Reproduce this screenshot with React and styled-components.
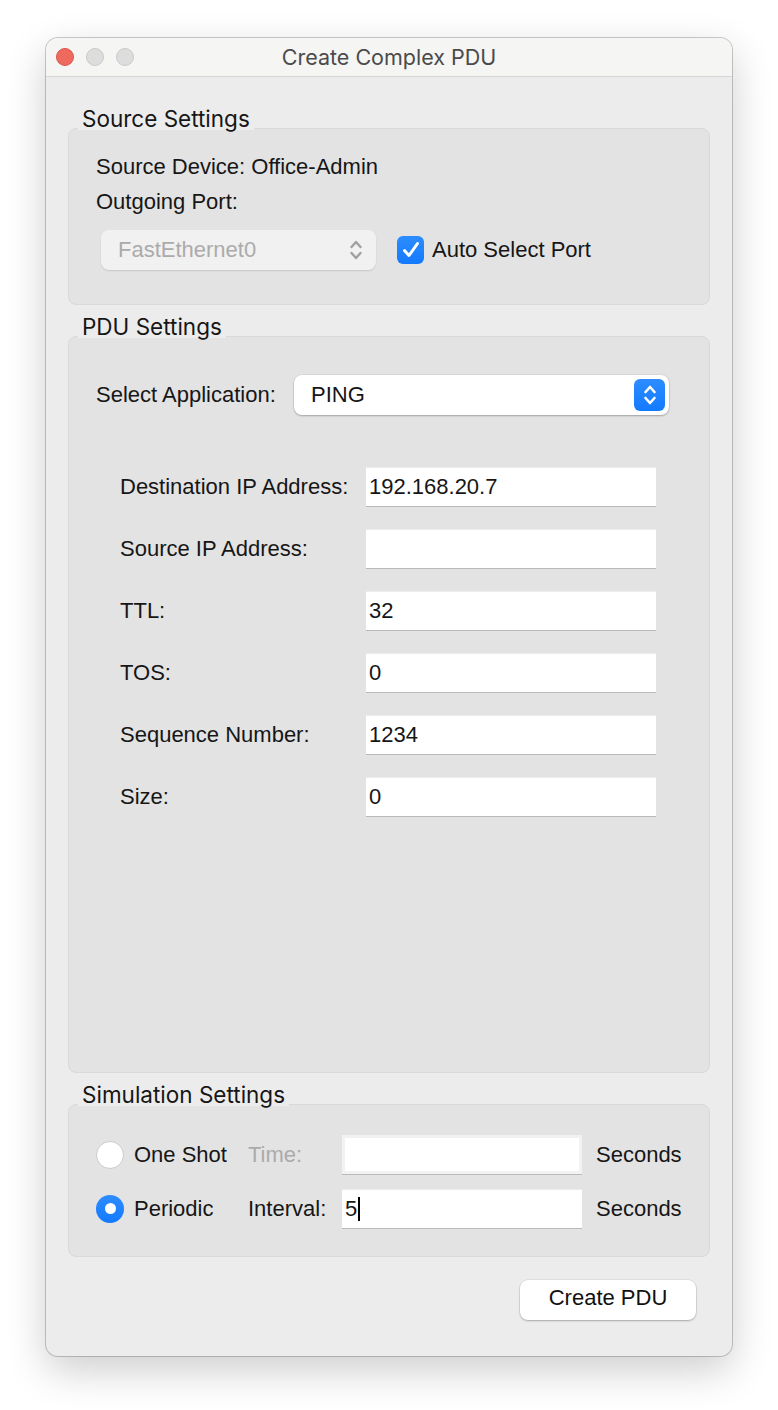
import React from "react";
import styled, { createGlobalStyle } from "styled-components";

const Global = createGlobalStyle`
  html, body { margin: 0; padding: 0; background: #ffffff; }
  body { font-family: "Liberation Sans", Arial, sans-serif; }
  * { box-sizing: border-box; }
`;

const Page = styled.div`
  padding: 38px 0 0 46px;
  width: 778px;
  height: 1410px;
`;

const Window = styled.div`
  width: 686px;
  height: 1318px;
  background: #ececec;
  border-radius: 12px;
  box-shadow: 0 0 0 1px rgba(0, 0, 0, 0.2), 0 14px 40px rgba(0, 0, 0, 0.2);
  display: flex;
  flex-direction: column;
  overflow: hidden;
`;

const TitleBar = styled.div`
  height: 39px;
  flex: none;
  background: #f5f5f4;
  border-bottom: 1px solid #d6d6d6;
  position: relative;
  display: flex;
  align-items: center;
  justify-content: center;
`;

const Lights = styled.div`
  position: absolute;
  left: 10px;
  top: 10px;
  display: flex;
  gap: 12px;
`;

const Light = styled.span`
  width: 18px;
  height: 18px;
  border-radius: 50%;
  background: ${(p) => (p.$red ? "#ee6a5f" : "#dddddd")};
  border: 1px solid ${(p) => (p.$red ? "#d9564b" : "#c9c9c9")};
`;

const Title = styled.div`
  font-family: Inter, "Open Sans", sans-serif;
  font-size: 21.5px;
  color: #4b4b4b;
  margin-top: -1px;
`;

const Content = styled.div`
  flex: 1;
  display: flex;
  flex-direction: column;
  padding: 31px 22px 36px 22px;
`;

const Group = styled.div`
  display: flex;
  flex-direction: column;
  flex: ${(p) => (p.$grow ? 1 : "none")};
  margin-top: ${(p) => p.$mt || 0}px;
`;

const Legend = styled.div`
  align-self: flex-start;
  margin-left: 10px;
  padding: 0 4px;
  height: 22px;
  line-height: 22px;
  margin-bottom: -2px;
  position: relative;
  z-index: 1;
  background: #ececec;
  font-family: Inter, "Open Sans", sans-serif;
  font-size: 22.5px;
  color: #161616;
`;

const Box = styled.div`
  background: #e3e3e3;
  border: 1px solid #d9d9d9;
  border-radius: 8px;
  flex: ${(p) => (p.$grow ? 1 : "none")};
  height: ${(p) => (p.$h ? `${p.$h}px` : "auto")};
  padding: ${(p) => p.$pad};
  display: flex;
  flex-direction: column;
`;

const Text = styled.div`
  font-size: 22px;
  line-height: 24px;
  color: ${(p) => (p.$muted ? "#ababab" : "#161616")};
  white-space: nowrap;
`;

const Row = styled.div`
  display: flex;
  align-items: center;
  margin-top: ${(p) => p.$mt || 0}px;
  margin-left: ${(p) => p.$ml || 0}px;
`;

const PortSelect = styled.div`
  width: 275px;
  height: 40px;
  border-radius: 8px;
  background: #f1f1f1;
  box-shadow: 0 1px 1.5px rgba(0, 0, 0, 0.12);
  display: flex;
  align-items: center;
  justify-content: space-between;
  padding: 0 13px 0 17px;
`;

const Checkbox = styled.span`
  width: 27px;
  height: 28px;
  border-radius: 6px;
  background: linear-gradient(#2d8cff, #137aff);
  display: flex;
  align-items: center;
  justify-content: center;
  margin-left: 21px;
  margin-right: 8px;
`;

const AppSelect = styled.div`
  width: 375px;
  height: 40px;
  border-radius: 8px;
  background: #ffffff;
  box-shadow: 0 0 0 0.5px rgba(0, 0, 0, 0.08), 0 1px 2px rgba(0, 0, 0, 0.25);
  display: flex;
  align-items: center;
  justify-content: space-between;
  padding: 0 4px 0 17px;
`;

const Stepper = styled.span`
  width: 31px;
  height: 32px;
  border-radius: 6px;
  background: linear-gradient(#2d8cff, #137aff);
  display: flex;
  align-items: center;
  justify-content: center;
`;

const LabelCell = styled(Text)`
  width: ${(p) => p.$w}px;
  flex: none;
`;

const Field = styled.div`
  width: ${(p) => p.$w}px;
  height: 39px;
  background: #ffffff;
  border: ${(p) => (p.$disabled ? "3px solid #f2f2f2" : "none")};
  border-top: ${(p) => (p.$disabled ? "3px solid #f2f2f2" : "1px solid #ececec")};
  box-shadow: 0 1px 0 #b9b9b9;
  display: flex;
  align-items: center;
  padding-left: 3px;
  font-size: 22px;
  color: #161616;
`;

const Caret = styled.span`
  display: inline-block;
  width: 1.5px;
  height: 24px;
  background: #000;
  margin-left: 1px;
`;

const Radio = styled.span`
  width: 28px;
  height: 28px;
  border-radius: 50%;
  flex: none;
  background: ${(p) => (p.$on ? "linear-gradient(#2d8cff, #137aff)" : "#ffffff")};
  border: ${(p) => (p.$on ? "none" : "1px solid #cbcbcb")};
  display: flex;
  align-items: center;
  justify-content: center;
  margin-right: 10px;
  &::after {
    content: "";
    display: ${(p) => (p.$on ? "block" : "none")};
    width: 11px;
    height: 11px;
    border-radius: 50%;
    background: #ffffff;
  }
`;

const Footer = styled.div`
  display: flex;
  justify-content: flex-end;
  padding-right: 14px;
  margin-top: 23px;
`;

const Button = styled.button`
  width: 176px;
  height: 40px;
  border: none;
  border-radius: 8px;
  background: #ffffff;
  box-shadow: 0 0 0 0.5px rgba(0, 0, 0, 0.1), 0 1px 2px rgba(0, 0, 0, 0.25);
  font-family: "Liberation Sans", Arial, sans-serif;
  font-size: 22px;
  color: #111;
  padding: 0 0 5px 0;
`;

const Chevrons = ({ color, w = 14, h = 26, sw = 2.2 }) => (
  <svg width={w} height={h} viewBox="0 0 14 26" fill="none">
    <path d="M2.5 10 L7 5 L11.5 10" stroke={color} strokeWidth={sw} strokeLinecap="round" strokeLinejoin="round" />
    <path d="M2.5 16 L7 21 L11.5 16" stroke={color} strokeWidth={sw} strokeLinecap="round" strokeLinejoin="round" />
  </svg>
);

const fields = [
  ["Destination IP Address:", "192.168.20.7"],
  ["Source IP Address:", ""],
  ["TTL:", "32"],
  ["TOS:", "0"],
  ["Sequence Number:", "1234"],
  ["Size:", "0"],
];

export default function App() {
  return (
    <Page>
      <Global />
      <Window>
        <TitleBar>
          <Lights>
            <Light $red />
            <Light />
            <Light />
          </Lights>
          <Title>Create Complex PDU</Title>
        </TitleBar>
        <Content>
          <Group>
            <Legend>Source Settings</Legend>
            <Box $h={177} $pad="26px 0 0 27px">
              <Text>Source Device: Office-Admin</Text>
              <Text style={{ marginTop: 11 }}>Outgoing Port:</Text>
              <Row $mt={16} $ml={5}>
                <PortSelect>
                  <Text $muted>FastEthernet0</Text>
                  <Chevrons color="#a0a0a0" sw={2.4} />
                </PortSelect>
                <Checkbox>
                  <svg width="20" height="20" viewBox="0 0 20 20" fill="none">
                    <path d="M3.5 10.5 L8 15.5 L16.5 3.5" stroke="#fff" strokeWidth="3" strokeLinecap="round" strokeLinejoin="round" />
                  </svg>
                </Checkbox>
                <Text>Auto Select Port</Text>
              </Row>
            </Box>
          </Group>

          <Group $grow $mt={11}>
            <Legend>PDU Settings</Legend>
            <Box $grow $pad="38px 0 0 27px">
              <Row>
                <LabelCell $w={198}>Select Application:</LabelCell>
                <AppSelect>
                  <Text>PING</Text>
                  <Stepper>
                    <Chevrons color="#ffffff" w={14} h={26} sw={2.6} />
                  </Stepper>
                </AppSelect>
              </Row>
              {fields.map(([label, value], i) => (
                <Row key={label} $mt={i === 0 ? 52 : 23} $ml={24}>
                  <LabelCell $w={246}>{label}</LabelCell>
                  <Field $w={290}>{value}</Field>
                </Row>
              ))}
            </Box>
          </Group>

          <Group $mt={11}>
            <Legend>Simulation Settings</Legend>
            <Box $h={153} $pad="30px 0 0 27px">
              <Row>
                <Radio />
                <LabelCell $w={114}>One Shot</LabelCell>
                <LabelCell $w={94} $muted>Time:</LabelCell>
                <Field $w={240} $disabled />
                <Text style={{ marginLeft: 14 }}>Seconds</Text>
              </Row>
              <Row $mt={15}>
                <Radio $on />
                <LabelCell $w={114}>Periodic</LabelCell>
                <LabelCell $w={94}>Interval:</LabelCell>
                <Field $w={240}>
                  5<Caret />
                </Field>
                <Text style={{ marginLeft: 14 }}>Seconds</Text>
              </Row>
            </Box>
          </Group>

          <Footer>
            <Button>Create PDU</Button>
          </Footer>
        </Content>
      </Window>
    </Page>
  );
}
